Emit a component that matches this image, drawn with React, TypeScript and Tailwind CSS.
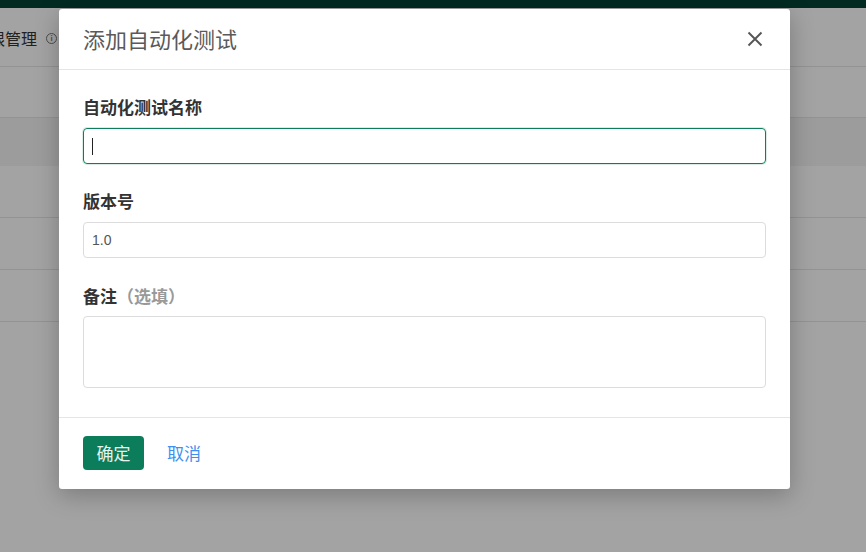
import React from "react";

const cjk = "font-['Noto_Sans_CJK_SC','Noto_Sans',sans-serif]";

const rows = [0, 1, 2];

const App: React.FC = () => {
  return (
    <div className={`relative h-[552px] w-[866px] overflow-hidden bg-white ${cjk}`}>
      {/* page behind the dialog */}
      <div className="h-[8px] bg-[#012a22]" />
      <div className="flex h-[59px] items-center border-b border-[#e6e6e6] pt-[2px]">
        <span className="-ml-[27px] text-[16px] text-[#333]">权限管理</span>
        <span className="ml-[9px] flex h-[11px] w-[11px] items-center justify-center rounded-full border border-[#777] text-[7px] font-bold leading-none text-[#777]">
          i
        </span>
      </div>
      <div className="h-[50px]" />
      <div className="h-[49px] border-t border-[#e6e6e6] bg-[#f5f5f5]" />
      {rows.map((r) => (
        <div key={r} className="h-[52px] border-b border-[#e6e6e6]" />
      ))}

      {/* overlay */}
      <div className="absolute inset-0 top-[8px] bg-black/[0.36]" />

      {/* dialog */}
      <div className="absolute left-[59px] top-[9px] w-[731px] rounded-[3px] bg-white shadow-[0_6px_24px_rgba(0,0,0,0.25)]">
        <div className="flex h-[61px] items-center justify-between border-b border-[#e5e5e5] px-[24px] pb-[1px]">
          <h4 className="text-[22px] font-normal text-[#5a5a5a]">添加自动化测试</h4>
          <button className="mr-[1px] flex h-[20px] w-[20px] items-center justify-center">
            <svg width="16" height="16" viewBox="0 0 16 16" fill="none">
              <path d="M1.5 1.5L14.5 14.5M14.5 1.5L1.5 14.5" stroke="#555" strokeWidth="1.9" />
            </svg>
          </button>
        </div>

        <div className="flex flex-col px-[24px] pb-[29px] pt-[27px]">
          <label className="text-[17px] font-bold leading-[20px] text-[#333]">自动化测试名称</label>
          <div className="mt-[11px] flex h-[36px] items-center rounded-[4px] border border-[#0d7e5c] px-[8px] shadow-[0_0_0_1px_rgba(13,126,92,0.15)]">
            <span className="h-[17px] w-px bg-[#222]" />
          </div>

          <label className="mt-[27px] text-[17px] font-bold leading-[20px] text-[#333]">版本号</label>
          <div className="mt-[11px] flex h-[36px] items-center rounded-[4px] border border-[#dcdcdc] px-[8px]">
            <span className="font-['Liberation_Sans',sans-serif] text-[14px] text-[#555]">1.0</span>
          </div>

          <label className="mt-[28px] text-[17px] font-bold leading-[20px] text-[#333]">
            备注<span className="text-[#999]">（选填）</span>
          </label>
          <div className="mt-[10px] h-[72px] rounded-[4px] border border-[#dcdcdc]" />
        </div>

        <div className="flex items-center gap-[23px] border-t border-[#e5e5e5] px-[24px] pb-[19px] pt-[18px]">
          <button className="h-[34px] w-[61px] rounded-[4px] bg-[#0b7d5b] text-[17px] text-[#e8f3ee]">
            确定
          </button>
          <button className="text-[17px] text-[#3d8ff0]">取消</button>
        </div>
      </div>
    </div>
  );
};

export default App;
